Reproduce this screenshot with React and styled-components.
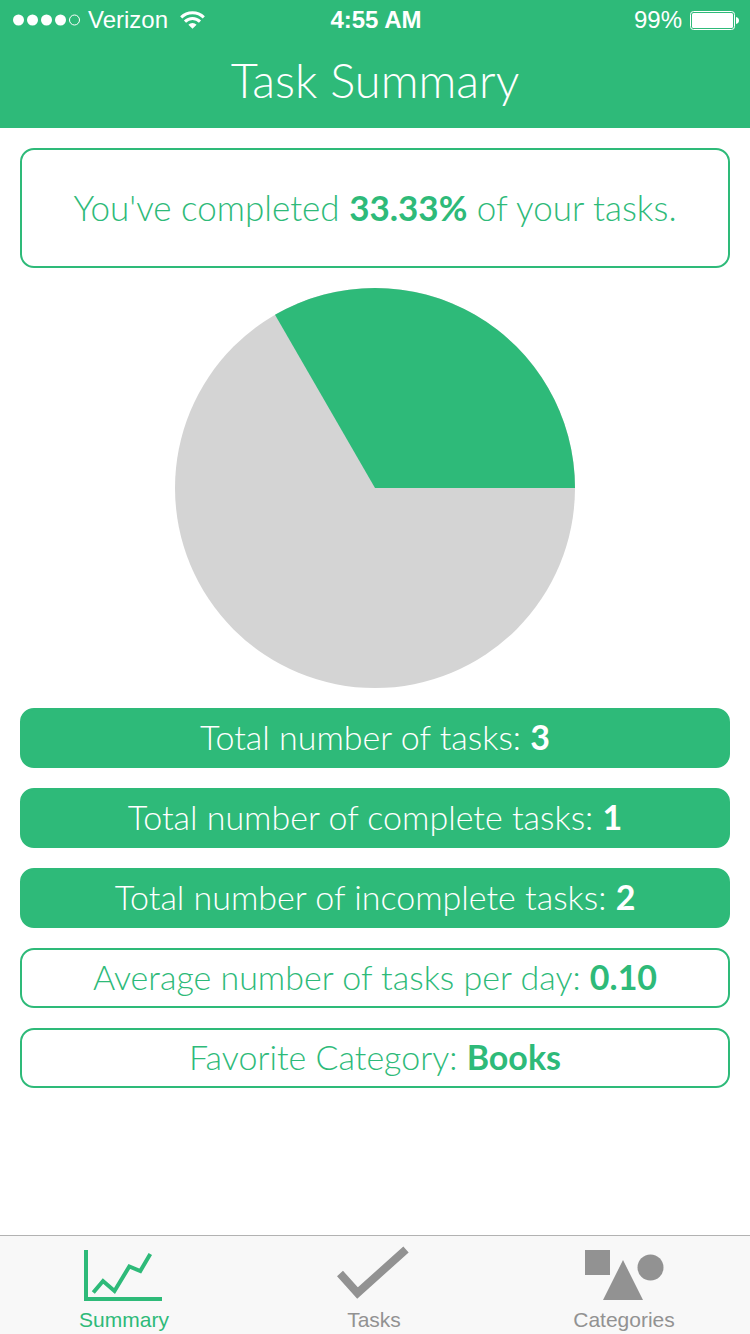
import React from "react";
import styled, { createGlobalStyle, ThemeProvider } from "styled-components";

const theme = {
  green: "#2eba79",
  pie: "#d4d4d4",
  idle: "#929292",
  bar: "#f8f8f8",
  line: "#b2b2b2",
  body: '"Lato", "Open Sans", sans-serif',
  system: '"Liberation Sans", Arial, sans-serif',
};

const GlobalStyle = createGlobalStyle`
  *, *::before, *::after { box-sizing: border-box; }
  body { margin: 0; background: #fff; }
`;

const Screen = styled.div`
  display: flex;
  flex-direction: column;
  min-height: 100vh;
  font-family: ${({ theme }) => theme.body};
`;

const Header = styled.header`
  background: ${({ theme }) => theme.green};
  color: #fff;
`;

const StatusBar = styled.div`
  display: grid;
  grid-template-columns: 1fr auto 1fr;
  align-items: center;
  padding: 0 11px 0 13px;
  font-family: ${({ theme }) => theme.system};
  font-size: 24px;
  line-height: 40px;
`;

const StatusGroup = styled.div`
  display: flex;
  align-items: center;
  justify-content: ${({ $end }) => ($end ? "flex-end" : "flex-start")};
  gap: 8px;
`;

const Carrier = styled.span`
  padding-right: 4px;
`;

const Clock = styled.time`
  font-weight: 700;
`;

const Title = styled.h1`
  margin: 0;
  padding-bottom: 8px;
  font-size: 47px;
  font-weight: 300;
  line-height: 80px;
  text-align: center;
`;

const Main = styled.main`
  flex: 1;
  display: flex;
  flex-direction: column;
  gap: 20px;
  padding: 20px;
`;

const Card = styled.p`
  display: flex;
  align-items: center;
  justify-content: center;
  margin: 0;
  padding-bottom: 2px;
  min-height: ${({ $tall }) => ($tall ? 120 : 60)}px;
  border: 2px solid ${({ theme }) => theme.green};
  border-radius: 14px;
  background: ${({ $filled, theme }) => ($filled ? theme.green : "#fff")};
  color: ${({ $filled, theme }) => ($filled ? "#fff" : theme.green)};
  font-size: ${({ $tall }) => ($tall ? 35 : 34)}px;
  font-weight: 300;
  line-height: 40px;
  text-align: center;

  strong { font-weight: 700; }
`;

const Pie = styled.svg`
  display: block;
  align-self: center;
  width: 400px;
  max-width: 100%;
`;

const TabBar = styled.nav`
  position: sticky;
  bottom: 0;
  display: grid;
  grid-template-columns: repeat(3, 1fr);
  border-top: 1px solid ${({ theme }) => theme.line};
  background: ${({ theme }) => theme.bar};
`;

const Tab = styled.a`
  display: flex;
  flex-direction: column;
  align-items: center;
  gap: 4px;
  padding: 8px 2px 2px 0;
  color: ${({ $active, theme }) => ($active ? theme.green : theme.idle)};
  font-family: ${({ theme }) => theme.system};
  font-size: 21px;
  line-height: 24px;
  text-decoration: none;
`;

const SignalIcon = () => (
  <svg width="67" height="12" viewBox="0 0 67 12" fill="#fff" aria-hidden="true">
    <circle cx="5.5" cy="6" r="5.5" />
    <circle cx="19.5" cy="6" r="5.5" />
    <circle cx="33.5" cy="6" r="5.5" />
    <circle cx="47.5" cy="6" r="5.5" />
    <circle cx="61.5" cy="6" r="5" fill="none" stroke="#fff" />
  </svg>
);

const WifiIcon = () => (
  <svg width="25" height="18" viewBox="0 0 25 18" fill="none" stroke="#fff" strokeWidth="3" aria-hidden="true">
    <path d="M1.2 6.4a16 16 0 0 1 22.6 0" />
    <path d="M5 10.6a10.6 10.6 0 0 1 15 0" />
    <path d="M12.5 17.8 8.4 13.7a5.8 5.8 0 0 1 8.2 0z" fill="#fff" stroke="none" />
  </svg>
);

const BatteryIcon = () => (
  <svg width="49" height="19" viewBox="0 0 49 19" aria-hidden="true">
    <rect x="0.5" y="0.5" width="44" height="18" rx="3" fill="none" stroke="#fff" />
    <rect x="2" y="2" width="41" height="15" rx="1.5" fill="#fff" />
    <path d="M46 6c2 .4 3 1.7 3 3.5s-1 3.1-3 3.5z" fill="#fff" />
  </svg>
);

const ChartIcon = () => (
  <svg width="80" height="60" viewBox="0 0 80 60" fill="none" stroke="currentColor" strokeWidth="4" aria-hidden="true">
    <path d="M2 6V55H78" />
    <path d="M9.3 48.5 19 37 30.5 47 45.3 22.5 56.3 27 66.3 10" />
  </svg>
);

const CheckIcon = () => (
  <svg width="80" height="60" viewBox="0 0 80 60" fill="none" stroke="currentColor" strokeWidth="8" aria-hidden="true">
    <path d="M6 29.5 23.5 49 72 5.5" />
  </svg>
);

const ShapesIcon = () => (
  <svg width="80" height="60" viewBox="0 0 80 60" fill="currentColor" aria-hidden="true">
    <path d="M1 6h25v25H1zM39 16l20 40H19z" />
    <circle cx="66.5" cy="23.5" r="13" />
  </svg>
);

const stats = [
  { label: "Total number of tasks:", value: "3", filled: true },
  { label: "Total number of complete tasks:", value: "1", filled: true },
  { label: "Total number of incomplete tasks:", value: "2", filled: true },
  { label: "Average number of tasks per day:", value: "0.10", filled: false },
  { label: "Favorite Category:", value: "Books", filled: false },
];

const tabs = [
  { label: "Summary", Icon: ChartIcon, active: true },
  { label: "Tasks", Icon: CheckIcon },
  { label: "Categories", Icon: ShapesIcon },
];

export default function App() {
  return (
    <ThemeProvider theme={theme}>
      <GlobalStyle />
      <Screen>
        <Header>
          <StatusBar>
            <StatusGroup>
              <SignalIcon />
              <Carrier>Verizon</Carrier>
              <WifiIcon />
            </StatusGroup>
            <Clock>4:55 AM</Clock>
            <StatusGroup $end>
              <span>99%</span>
              <BatteryIcon />
            </StatusGroup>
          </StatusBar>
          <Title>Task Summary</Title>
        </Header>
        <Main>
          <Card $tall>
            <span>You've completed <strong>33.33%</strong> of your tasks.</span>
          </Card>
          <Pie viewBox="0 0 400 400" role="img" aria-label="33.33% of tasks completed">
            <circle cx="200" cy="200" r="200" fill={theme.pie} />
            <path d="M200 200H400A200 200 0 0 0 100 26.8Z" fill={theme.green} />
          </Pie>
          {stats.map(({ label, value, filled }) => (
            <Card key={label} $filled={filled}>
              <span>{label} <strong>{value}</strong></span>
            </Card>
          ))}
        </Main>
        <TabBar>
          {tabs.map(({ label, Icon, active }) => (
            <Tab key={label} href={`#${label.toLowerCase()}`} $active={active} aria-current={active ? "page" : undefined}>
              <Icon />
              {label}
            </Tab>
          ))}
        </TabBar>
      </Screen>
    </ThemeProvider>
  );
}
